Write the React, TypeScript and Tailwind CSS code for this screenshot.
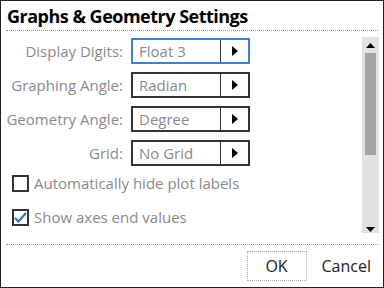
export default function App() {
  const rows = [
    { label: "Display Digits:", value: "Float 3", focus: true },
    { label: "Graphing Angle:", value: "Radian" },
    { label: "Geometry Angle:", value: "Degree" },
    { label: "Grid:", value: "No Grid" },
  ];

  return (
    <div
      className="w-[384px] h-[288px] bg-white border border-[#222] flex flex-col overflow-hidden"
      style={{ fontFamily: '"Open Sans", "Liberation Sans", sans-serif' }}
    >
      {/* title */}
      <div className="h-[29px] px-[6px] flex items-center">
        <h1 className="text-[18px] font-bold text-black leading-none tracking-[-0.5px]">
          Graphs &amp; Geometry Settings
        </h1>
      </div>
      <div className="mx-[5px] border-b border-dotted border-[#999]" />

      {/* body */}
      <div className="flex flex-1">
        <div className="flex-1 pt-[7px]">
          <div className="grid grid-cols-[117px_119px] gap-x-[8px] gap-y-[8px] pl-[5px]">
            {rows.map((r) => (
              <div key={r.label} className="contents">
                <div className="h-[26px] flex items-center justify-end text-[15px] text-[#8a8a8a]">
                  {r.label}
                </div>
                <div
                  className={
                    r.focus
                      ? "h-[26px] flex border-2 border-[#3c7fd6]"
                      : "h-[26px] flex border-2 border-[#333]"
                  }
                >
                  <div className="flex-1 flex items-center pl-[6px] text-[15px] text-[#8a8a8a] border-r-[1.5px] border-[#333]">
                    {r.value}
                  </div>
                  <div className="w-[27px] flex items-center justify-center">
                    <svg width="6" height="10" viewBox="0 0 6 10">
                      <path d="M0 0 L6 5 L0 10 Z" fill="#000" />
                    </svg>
                  </div>
                </div>
              </div>
            ))}
          </div>

          <div className="mt-[9px] pl-[11px] flex flex-col gap-[17px]">
            <label className="h-[17px] flex items-center gap-[5px] text-[15px] leading-none text-[#8a8a8a]">
              <span className="w-[17px] h-[17px] border-2 border-[#333] bg-white" />
              Automatically hide plot labels
            </label>
            <label className="h-[17px] flex items-center gap-[5px] text-[15px] leading-none text-[#8a8a8a]">
              <span className="w-[17px] h-[17px] border-2 border-[#333] bg-white flex items-center justify-center">
                <svg width="13" height="11" viewBox="0 0 13 11">
                  <path d="M1 6 L4.5 9.5 L12 1" fill="none" stroke="#2a73d0" strokeWidth="2.2" />
                </svg>
              </span>
              Show axes end values
            </label>
          </div>
        </div>

        {/* scrollbar */}
        <div className="w-[17px] mr-[4px] mt-[6px] mb-[11px] bg-[#e2e2e2] flex flex-col items-center">
          <svg className="mt-[6px]" width="9" height="5" viewBox="0 0 9 5">
            <path d="M0 5 L4.5 0 L9 5 Z" fill="#000" />
          </svg>
          <div className="mt-[5px] w-[11px] h-[102px] bg-[#a3a3a3]" />
          <div className="flex-1" />
          <svg className="mb-[1px]" width="9" height="5" viewBox="0 0 9 5">
            <path d="M0 0 L4.5 5 L9 0 Z" fill="#000" />
          </svg>
        </div>
      </div>

      <div className="mx-[5px] border-b border-dotted border-[#999]" />

      {/* buttons */}
      <div className="h-[42px] flex items-center justify-end pr-[12px] gap-[15px]">
        <button className="w-[60px] h-[30px] border border-dotted border-[#aaa] text-[16px] text-[#222]">
          OK
        </button>
        <span className="text-[16px] text-[#222]">Cancel</span>
      </div>
    </div>
  );
}
